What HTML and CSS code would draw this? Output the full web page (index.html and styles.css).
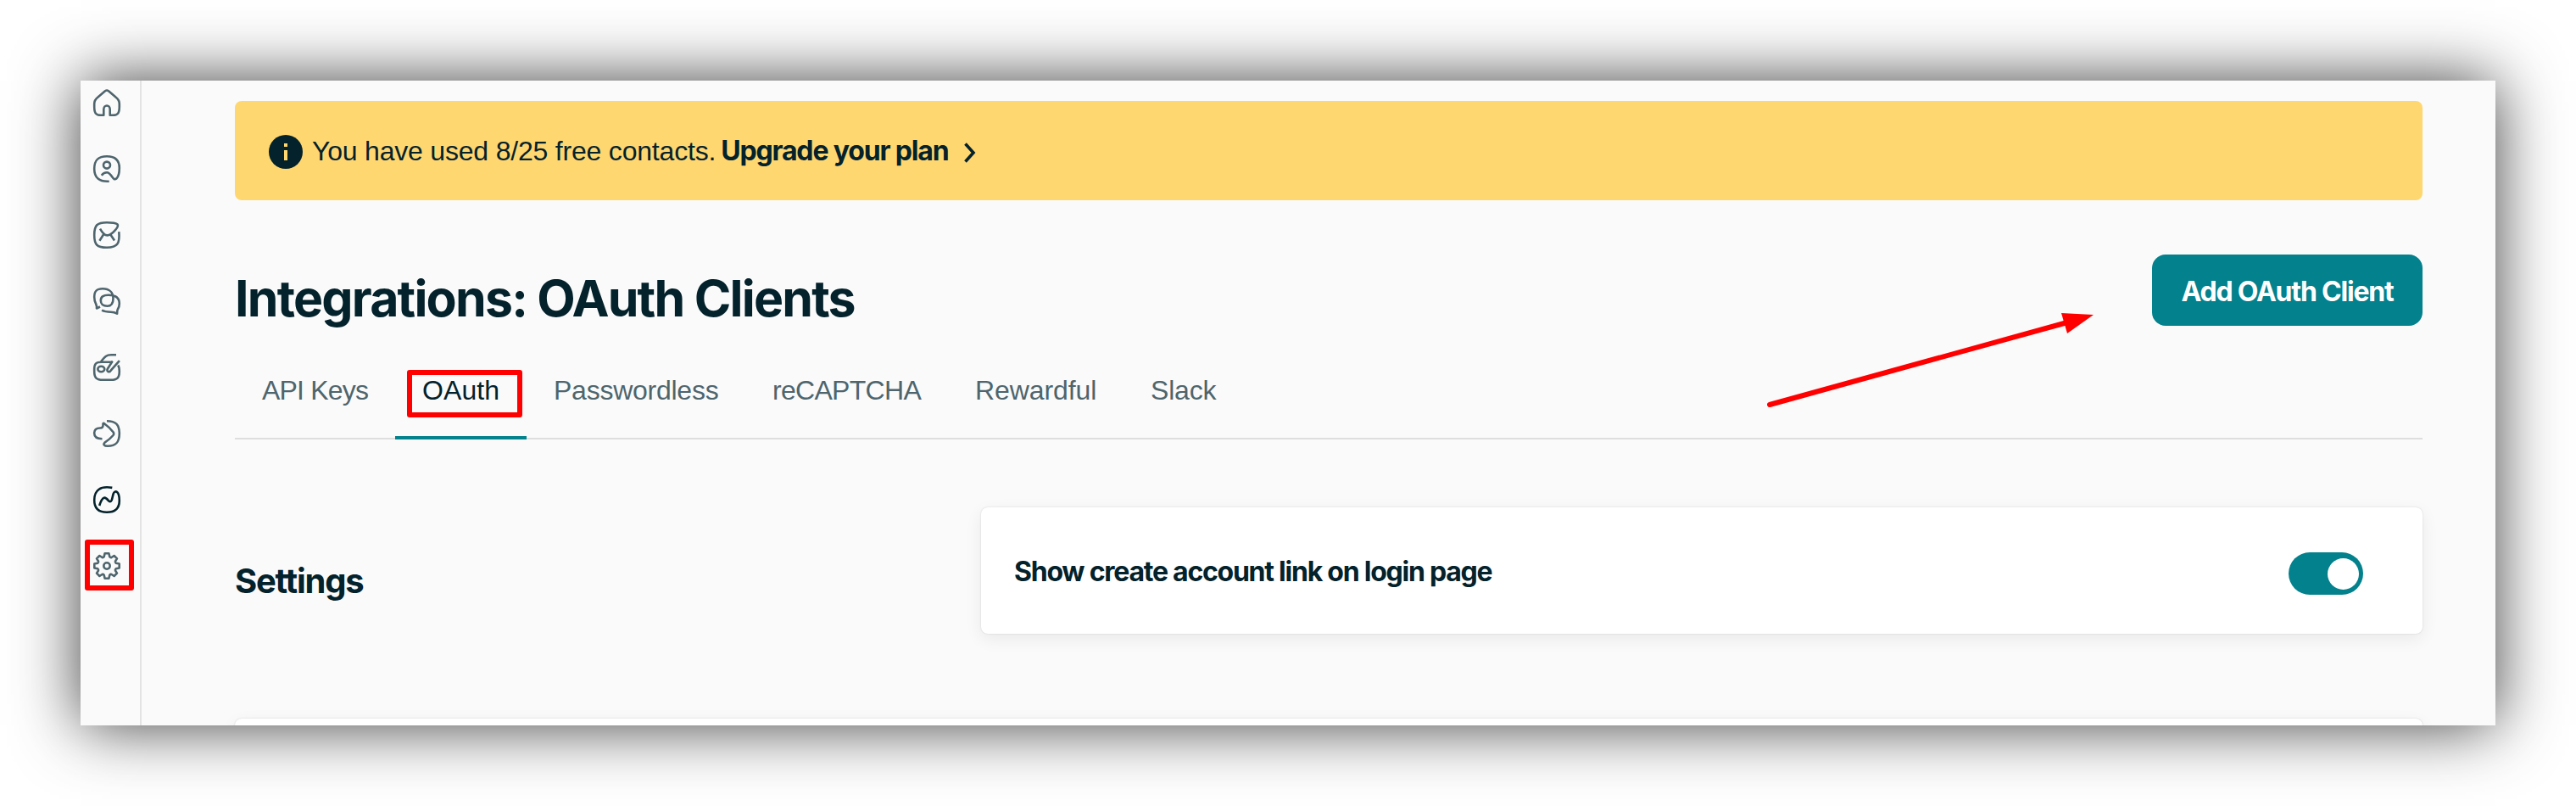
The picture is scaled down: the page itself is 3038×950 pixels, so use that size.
FILE: index.html
```
<!DOCTYPE html>
<html lang="en">
<head>
  <meta charset="UTF-8">
  <meta name="viewport" content="width=device-width, initial-scale=1">
  <title>Integrations: OAuth Clients</title>
  <link rel="stylesheet" href="styles.css">
</head>
<body>

  <div class="window">
    <nav class="sidebar">
      <a class="nav-item"><svg viewBox="0 0 32 32"><path d="M12.3 30.8H9C3.2 30.8 1.2 28.5 1.2 21v-3.500C1.200 13.500 2.200 12 5.500 9.500L14 2.300Q16 .7 18 2.300L26.500 9.500C29.800 12 30.800 13.500 30.800 17.500V21c0 7.500-2 9.800-7.800 9.800h-3.300V24c0-6-7.400-6-7.400 0z"/></svg></a>
      <a class="nav-item"><svg viewBox="0 0 32 32"><path d="M18.700 30.700C7 31.500 1.200 26.500 1.200 16 1.200 5.500 6 1.200 16 1.200S30.800 5.500 30.800 15c0 6-1.300 10.500-3.500 12.500-2 1.800-3.500.2-5-2C20 22 18.500 20.200 16 20.200c-2.500 0-4.500 1-6.200 3.500"/><circle cx="16" cy="11.600" r="4"/></svg></a>
      <a class="nav-item"><svg viewBox="0 0 32 32"><path d="M30.300 12.200c1.200 13.500-1.500 18.600-14.300 18.600C4.500 30.800 1.200 27.500 1.200 16S4.500 1.200 16 1.200c6 0 10.500.6 12.300 2 1.300 1.200.3 4-2.300 7-3.500 4-6.500 6.200-9.500 6.200-3.500 0-5.500-2.500-8.500-7.800M12 15.500l-4.600 7.200M20.300 15.500l4.700 7"/></svg></a>
      <a class="nav-item"><svg viewBox="0 0 32 32"><path d="M8 22.500l-4 2c.3-2 .2-3.200-.8-5C2 17 1.200 14.500 1.200 11 1.200 4 4 1.200 11 1.200c8 0 12.500 4.500 12.500 11.500 0 6-2 9-7 9s-7.700-2.500-7.700-6.500c0-4.500 3-6.500 9-6.500 9 0 13 3.300 13 10 0 2.500-.5 4.500-1.800 6.500-1 1.800-.9 3.500-.9 5.500-2.500-1.600-4.500-2-7.500-2-4.500 0-7.500-.4-10.500-2"/></svg></a>
      <a class="nav-item"><svg viewBox="0 0 32 32"><path d="M27 1.300h-6c-5.500 0-7 1.700-12.500 8.700M23 9.800H10c-7 0-8.800 2-8.800 8.500v2.500c0 7.500 2.500 10 10 10h9.600c7.500 0 10-2.500 10-10 0-3.500-.3-5.500-1.600-7.300"/><path d="M22.700 8.600L17 17.500c-2 3.300 1.600 5.200 3.700 2.200L30.900 8.200"/><ellipse cx="9.300" cy="18" rx="4" ry="3.300"/></svg></a>
      <a class="nav-item"><svg viewBox="0 0 32 32"><path d="M16 1.200c10.500 0 14.800 4.300 14.800 14.800S26.500 30.800 17 30.800c-4.500 0-5.500-2.300-3.500-4.200 4-2.600 7-5 10-8.600.9-1.200.9-2.500 0-3.700C20.500 10.500 17 7 13 4.200c-.9-.6-1.600-.2-1.500.8.200 3-.6 4.500-3.500 4.500-4.500 0-6.800 2-6.800 6.300s2.800 6.400 9.300 6.400"/></svg></a>
      <a class="nav-item active"><svg viewBox="0 0 32 32"><path d="M22.300 1.900C8 -.6 1.200 5 1.200 16.500c0 9.500 5 14.300 14.800 14.300S30.800 26 30.800 17c0-5-1-8.500-2.700-10-1.800-1.500-3.600-.3-4.400 2-.8 2.200-1.200 5.500-2 7.500-.9 2-2.500 2.200-4 .4-1.700-2.200-3-3.600-5-3.200-2.200.6-4 4.500-5.500 9.300"/></svg></a>
      <a class="nav-item boxed"><svg viewBox="0 0 32 32"><path d="M12.700 5.200L13.600 1.300h4.800l.9 3.900q1 1.200 2.200.8L24.600 4l3.400 3.400-2 3.100q-.4 1.200.8 2.200l3.900.9v4.800l-3.900.9q-1.200 1-.8 2.200l2 3.100-3.400 3.400-3.100-2q-1.200-.4-2.200.8l-.9 3.900h-4.800l-.9-3.900q-1-1.200-2.200-.8l-3.100 2L4 24.600l2-3.100q.4-1.200-.8-2.200l-3.900-.9v-4.800l3.900-.9q1.200-1 .8-2.200L4 7.400 7.400 4l3.100 2q1.200.4 2.200-.8z"/><circle cx="16" cy="16" r="3.700"/></svg></a>
    </nav>

    <main class="content">
      <div class="banner">
        <svg class="info" viewBox="0 0 40 40"><circle cx="20" cy="20" r="20"/><path d="M18 10h4v4h-4zM18 18h4v12h-4z"/></svg>
        <span>You have used 8/25 free contacts.</span>
        <a class="upgrade">Upgrade your plan</a>
        <svg class="chevron" viewBox="0 0 16 26"><path d="M2.500 2.500L12 13 2.500 23.500"/></svg>
      </div>

      <header class="page-header">
        <h1>Integrations: OAuth Clients</h1>
        <button class="add-btn">Add OAuth Client</button>
      </header>

      <div class="tabs">
        <a class="tab tab-keys">API Keys</a>
        <a class="tab tab-oauth selected">OAuth</a>
        <a class="tab tab-pass">Passwordless</a>
        <a class="tab tab-captcha">reCAPTCHA</a>
        <a class="tab tab-reward">Rewardful</a>
        <a class="tab">Slack</a>
      </div>

      <section class="settings">
        <h2>Settings</h2>
        <div class="card">
          <span>Show create account link on login page</span>
          <div class="toggle"><div class="knob"></div></div>
        </div>
      </section>

      <div class="card next-card"></div>
    </main>

    <svg class="arrow" viewBox="0 0 390 120"><path class="shaft" d="M7 108L358 11"/><path class="head" d="M351 0L389 2 358 24z"/></svg>
  </div>

</body>
</html>
```
FILE: styles.css
```
*,
*::before,
*::after {
  box-sizing: border-box;
}

body {
  margin: 0;
  padding: 95px;
  height: 950px;
  overflow: hidden;
  background: #fff;
  color: #04222b;
  font-family: "Liberation Sans", Arial, sans-serif;
  font-size: 32px;
}

.window {
  position: relative;
  display: flex;
  height: 760px;
  overflow: hidden;
  background: #fafafa;
  box-shadow: 0 0 72px rgba(0, 0, 0, 0.76);
}

.sidebar {
  display: flex;
  flex-direction: column;
  gap: 46px;
  width: 72px;
  padding: 10px 0 0 15px;
  border-right: 2px solid #e3e3e3;
}

.nav-item {
  position: relative;
  width: 32px;
  height: 32px;
}

.nav-item svg {
  display: block;
  width: 32px;
  height: 32px;
  overflow: visible;
  fill: none;
  stroke: #4e656d;
  stroke-width: 2.6;
  stroke-linejoin: round;
}

.nav-item.active svg {
  stroke: #04222b;
}

.boxed::after {
  content: "";
  position: absolute;
  top: -15px;
  left: -10px;
  width: 58px;
  height: 60px;
  border: 6px solid #f00;
  border-radius: 3px;
}

.content {
  flex: 1;
  padding: 24px 86px 0 110px;
}

.banner {
  display: flex;
  align-items: center;
  height: 117px;
  padding-left: 40px;
  border-radius: 8px;
  background: #ffd771;
  line-height: 40px;
  letter-spacing: -0.2px;
}

.info {
  width: 40px;
  height: 40px;
  margin: 2px 11px 0 0;
  fill: #04222b;
}

.info path {
  fill: #ffd771;
}

.upgrade {
  margin-left: 6px;
  font-family: Inter, sans-serif;
  font-weight: 700;
  letter-spacing: -1.15px;
}

.chevron {
  width: 16px;
  height: 26px;
  margin: 5px 0 0 17px;
  fill: none;
  stroke: #04222b;
  stroke-width: 3.6;
}

.page-header {
  display: flex;
  align-items: center;
  justify-content: space-between;
  height: 84px;
  margin-top: 64px;
}

h1,
h2 {
  margin: 0;
  font-family: Inter, sans-serif;
  font-weight: 700;
}

h1 {
  margin-top: 19px;
  font-size: 59px;
  line-height: 64px;
  letter-spacing: -1.8px;
}

.add-btn {
  width: 319px;
  height: 84px;
  padding: 3px 0 0;
  border: 0;
  border-radius: 16px;
  background: #03818c;
  color: #fff;
  font: 700 32px Inter, sans-serif;
  letter-spacing: -1.2px;
}

.tabs {
  display: flex;
  height: 98px;
  margin-top: 36px;
  border-bottom: 2px solid #dedede;
}

.tab {
  position: relative;
  height: 98px;
  padding: 20px 0 0 32px;
  color: #4e656d;
  line-height: 40px;
  letter-spacing: -0.2px;
}

.tab-keys {
  width: 189px;
  letter-spacing: -0.8px;
}

.tab-oauth {
  width: 155px;
  letter-spacing: 0.1px;
}

.tab-pass {
  width: 257px;
  letter-spacing: -0.25px;
}

.tab-captcha {
  width: 240px;
  padding-left: 33px;
  letter-spacing: -0.7px;
}

.tab-reward {
  width: 207px;
  letter-spacing: -0.1px;
}

.tab.selected {
  border-bottom: 4px solid #03818c;
  color: #04222b;
}

.tab.selected::after {
  content: "";
  position: absolute;
  top: 16px;
  left: 14px;
  width: 136px;
  height: 56px;
  border: 6px solid #f00;
  border-radius: 3px;
}

.settings {
  display: grid;
  grid-template-columns: 880px 1fr;
  margin-top: 80px;
}

h2 {
  padding-top: 63px;
  font-size: 40px;
  line-height: 48px;
  letter-spacing: -1.25px;
}

.card {
  display: flex;
  align-items: center;
  justify-content: space-between;
  height: 149px;
  padding: 2px 70px 0 39px;
  border-radius: 8px;
  background: #fff;
  box-shadow: 0 0 2px rgba(0, 0, 0, 0.16), 0 6px 20px rgba(0, 0, 0, 0.07);
  font-family: Inter, sans-serif;
  font-weight: 700;
  letter-spacing: -1.24px;
}

.toggle {
  width: 88px;
  height: 50px;
  margin-top: 5px;
  padding: 7px 0 0 46px;
  border-radius: 25px;
  background: #03818c;
}

.knob {
  width: 37px;
  height: 37px;
  border-radius: 50%;
  background: #fff;
}

.next-card {
  margin-top: 100px;
}

/* red pointer over the header */
.arrow {
  position: absolute;
  top: 274px;
  left: 1985px;
  width: 390px;
  height: 120px;
  fill: #f00;
}

.arrow .shaft {
  stroke: #f00;
  stroke-width: 6;
  stroke-linecap: round;
}
```
